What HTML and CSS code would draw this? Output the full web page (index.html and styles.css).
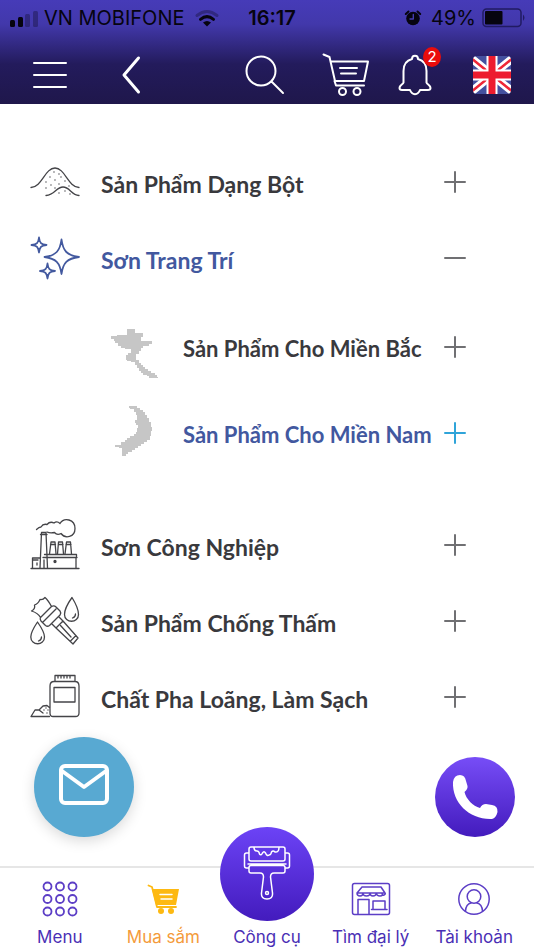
FILE: index.html
```html
<!DOCTYPE html>
<html lang="vi">
<head>
<meta charset="utf-8">
<meta name="viewport" content="width=device-width, initial-scale=1">
<title>Sản phẩm</title>
<link rel="stylesheet" href="styles.css">
</head>
<body>
<div class="app">
  <header class="header">
    <div class="status">
      <div class="status-side">
        <svg class="signal" viewBox="0 0 28 18" aria-hidden="true">
          <rect x="0" y="11" width="5" height="7" rx="1.5"/>
          <rect x="8" y="8" width="5" height="10" rx="1.5"/>
          <rect class="faint" x="15" y="5" width="5" height="13" rx="1.5"/>
          <rect class="faint" x="23" y="2" width="5" height="16" rx="1.5"/>
        </svg>
        <span>VN MOBIFONE</span>
        <svg class="wifi" viewBox="0 0 24 18" aria-hidden="true">
          <path class="arc faint" d="M2 6.500Q12-1.500 22 6.500"/>
          <path class="arc" d="M5.500 10.300Q12 5 18.500 10.300"/>
          <path d="M8 13.500Q12 10.500 16 13.500L12 17.500Z"/>
        </svg>
      </div>
      <span class="clock">16:17</span>
      <div class="status-side status-end">
        <svg class="alarm" viewBox="0 0 16 16" aria-hidden="true">
          <circle cx="8" cy="8.500" r="6.800"/>
          <path class="bells" d="M.8 4 3.500 1.500M15.200 4 12.500 1.500"/>
          <path class="hands" d="M8.300 4.500V9H5"/>
        </svg>
        <span>49%</span>
        <svg class="battery" viewBox="0 0 44 20" aria-hidden="true">
          <rect class="shell" x="1" y="1" width="38" height="17.500" rx="3.500"/>
          <rect x="3" y="3" width="17.500" height="13.500" rx="1"/>
          <path class="tip" d="M41 6.500q3 3 0 6.500z"/>
        </svg>
      </div>
    </div>
    <div class="toolbar">
      <div class="tools tools-start">
        <button class="tool" type="button" aria-label="Menu">
          <svg class="i-burger" viewBox="0 0 34 30"><path d="M1 3h32M1 15h32M1 27h32"/></svg>
        </button>
        <button class="tool" type="button" aria-label="Quay lại">
          <svg class="i-back" viewBox="0 0 20 38"><path d="M17.500 2 3 19l14.500 17"/></svg>
        </button>
      </div>
      <div class="tools tools-end">
        <button class="tool" type="button" aria-label="Tìm kiếm">
          <svg class="i-search" viewBox="0 0 40 40"><circle cx="16" cy="16" r="14.500"/><path d="M26.500 26.500 38 38"/></svg>
        </button>
        <button class="tool" type="button" aria-label="Giỏ hàng">
          <svg class="i-cart" viewBox="0 0 48 44"><path d="M1.500 1.500 7.500 4 13 28H42M9 8.500H46L42 28M12.500 28 14 32.500H42M18 15H35M19 20.500H34"/><circle cx="20.500" cy="38.500" r="3.500"/><circle cx="35" cy="38.500" r="3.500"/></svg>
        </button>
        <button class="tool bell" type="button" aria-label="Thông báo">
          <svg class="i-bell" viewBox="0 0 34 42"><path d="M14 5C14 .5 20 .5 20 5C26 6.500 28.500 11 28.500 17V28.500C29 30.500 32.500 31 32.500 34Q32.500 36 30 36H22C20 41.500 14 41.500 12 36H4Q1.500 36 1.500 34C1.500 31 5 30.500 5.500 28.500V17C5.500 11 8 6.500 14 5Z"/></svg>
          <span class="badge">2</span>
        </button>
        <button class="tool" type="button" aria-label="English">
          <svg class="i-flag" viewBox="0 0 38 38">
            <defs><clipPath id="flag"><rect width="38" height="38" rx="4"/></clipPath></defs>
            <g clip-path="url(#flag)">
              <rect width="38" height="38" fill="#44509f" stroke="none"/>
              <path d="M-2 2 40 36M-2 36 40 2" stroke="#fff" stroke-width="8"/>
              <path d="M-2 2 40 36M-2 36 40 2" stroke="#ee2737" stroke-width="2.500"/>
              <path d="M19 0V38M0 19H38" stroke="#fff" stroke-width="11"/>
              <path d="M19 0V38M0 19H38" stroke="#ed1c2e" stroke-width="7"/>
            </g>
          </svg>
        </button>
      </div>
    </div>
  </header>

  <main class="main">
    <ul class="menu">
      <li>
        <button class="row" type="button" aria-expanded="false">
          <svg class="art" viewBox="0 0 50 50" aria-hidden="true">
            <path d="M1 30.500C12 30 15 11 25 11S38 30 49 30.500M16 38.500C25 38 26 30 33 30S41 38 49 38.500"/>
            <path class="dots" d="M24 15h0M29 17h0M20 20h0M25 23h0M31 20h0M16 25h0M21 28h0M29 27h0M35 24h0M16 31h0M25 31h0M39 29h0M29 36h0M35 34h0M40 37h0"/>
          </svg>
          <span class="label">Sản Phẩm Dạng Bột</span>
          <svg class="sign" viewBox="0 0 22 22" aria-hidden="true"><path d="M11 1V21M1 11H21"/></svg>
        </button>
      </li>
      <li>
        <button class="row active" type="button" aria-expanded="true">
          <svg class="art bold" viewBox="0 0 50 50" aria-hidden="true">
            <path d="M31.500 6.500C33 18 37 22.500 49 24C37 25.500 33 30 31.500 41C30 30 26 25.500 14.500 24C26 22.500 30 18 31.500 6.500Z"/>
            <path d="M9 4.500C9.700 10 11 11.500 16.500 12C11 12.500 9.700 14 9 19.500C8.300 14 7 12.500 1.500 12C7 11.500 8.300 10 9 4.500Z"/>
            <path d="M17.500 30.500C18.200 36 19.500 37.500 25 38C19.500 38.500 18.200 40 17.500 45.500C16.800 40 15.500 38.500 10 38C15.500 37.500 16.800 36 17.500 30.500Z"/>
          </svg>
          <span class="label">Sơn Trang Trí</span>
          <svg class="sign" viewBox="0 0 22 22" aria-hidden="true"><path d="M1 11H21"/></svg>
        </button>
        <ul class="submenu">
          <li>
            <button class="row" type="button" aria-expanded="false">
              <svg class="map" viewBox="0 0 50 64" aria-hidden="true">
                <defs><pattern id="grid" width="2" height="2" patternUnits="userSpaceOnUse"><rect width="2" height="2" fill="#d6d6d6"/><circle cx="1" cy="1" r=".8" fill="#b3b3b3"/></pattern></defs>
                <path d="M17 14H25V18H33V22H31V26H42V29H39V31H33V33H31V36H29V39H26V45H29V48H31V50H33V52H35V54H38V56H41V58H45V60H47V62H48V63H39V61H37V60H33V58H31V56H29V53H27V50H25V47H21V46H17V45H16V40H18V38H21V34H15V33H11V31H8V28H5V26H4V24H1V21H7V20H17Z"/>
              </svg>
              <span class="label">Sản Phẩm Cho Miền Bắc</span>
              <svg class="sign" viewBox="0 0 22 22" aria-hidden="true"><path d="M11 1V21M1 11H21"/></svg>
            </button>
          </li>
          <li>
            <button class="row active" type="button" aria-expanded="false">
              <svg class="map" viewBox="0 0 50 64" aria-hidden="true">
                <path d="M19 5H27V7H30V9H33V11H35V14H37V17H39V21H41V26H42V30H41V35H40V39H37V41H34V43H31V45H28V47H25V49H22V51H18V53H16V55H12V47H9V46H5V44H11V41H15V39H17V37H20V35H24V33H26V31H27V27H28V24H26V22H25V19H27V14H26V11H24V8H20V7H19Z"/>
              </svg>
              <span class="label">Sản Phẩm Cho Miền Nam</span>
              <svg class="sign sky" viewBox="0 0 22 22" aria-hidden="true"><path d="M11 1V21M1 11H21"/></svg>
            </button>
          </li>
        </ul>
      </li>
      <li>
        <button class="row" type="button" aria-expanded="false">
          <svg class="art" viewBox="0 0 50 50" aria-hidden="true">
            <path d="M1 48.500H49M2.500 48V38H10M2.500 40H8M10 48 11.500 12.500H16L17.500 48M10.500 14.500H17M13 37.500H47M14.500 34.500H46.500V37.500M46 38V48M14 40V48M19.500 34 21 22H25L26 34M27.500 34 28.500 22H32.500L33.500 34M35 34 36.500 22H40.500L41.500 34M20.500 24.500H25.500M28.500 24.500H33M36 24.500H41M7 43V45"/>
            <path d="M6.500 9.500Q9 7 11 7Q13 3.500 17 4.500Q20 1 24 3Q27 .5 30 3.500C34-3 45-1 45 8.500C45 17.500 35 19 31 13.500Q27 15.500 24.500 12.500Q20 13.500 17 12"/><circle class="solid" cx="25" cy="41.500" r="1"/>
          </svg>
          <span class="label">Sơn Công Nghiệp</span>
          <svg class="sign" viewBox="0 0 22 22" aria-hidden="true"><path d="M11 1V21M1 11H21"/></svg>
        </button>
      </li>
      <li>
        <button class="row" type="button" aria-expanded="false">
          <svg class="art" viewBox="0 0 50 50" aria-hidden="true">
            <path d="M21.500 10.500Q18 4 15 1.500Q13 4 10 3.500Q8 8 4.500 9Q5.500 13 1.500 15Q8 17 10.500 21.500M21.500 10.500Q24 9 26 11L30 15Q31.500 17 30 19L19.500 29.500Q17.500 31 15.500 29.500L11 25Q9.500 23 10.500 21.500ZM26 13 13 26M29 21 33 25 26 32 22 28M33 25 48 42 43 48 26 32M46 39.500 40.500 45M30.500 29.500 41 41"/>
            <path d="M42 1.500Q34.500 12 34.500 18.500C34.500 27.500 48.500 27.500 48.500 18.500Q48.500 12 42 1.500ZM7.500 26Q.8 36 .8 41C.8 50 14.500 50 14.500 41Q14.500 36 7.500 26ZM45.500 18Q45.500 21 42.500 22M11.500 41Q11.500 44 8.500 45"/>
          </svg>
          <span class="label">Sản Phẩm Chống Thấm</span>
          <svg class="sign" viewBox="0 0 22 22" aria-hidden="true"><path d="M11 1V21M1 11H21"/></svg>
        </button>
      </li>
      <li>
        <button class="row" type="button" aria-expanded="false">
          <svg class="art" viewBox="0 0 50 50" aria-hidden="true">
            <path d="M25 9V3.500H45V9M28 4V6M31 4V6M34 4V6M37 4V6M40 4V6M24 9.500H45Q49 9.500 49 14V41Q49 44.500 45.500 44.500H23Q20 44.500 20 41V14Q20 9.500 24 9.500ZM24 15.500H45V30H24ZM19.500 44.500H1L5 38H9L13 34 17 33.500 20 36M9 38 13 41"/><path class="dots" d="M16 36h0M14 38h0M18 38h0M17 41h0"/>
          </svg>
          <span class="label">Chất Pha Loãng, Làm Sạch</span>
          <svg class="sign" viewBox="0 0 22 22" aria-hidden="true"><path d="M11 1V21M1 11H21"/></svg>
        </button>
      </li>
    </ul>
    <div class="contacts">
      <button class="mail" type="button" aria-label="Gửi thư">
        <svg viewBox="0 0 50 42"><rect x="2" y="2" width="46" height="37" rx="4"/><path d="M3 7 25 23 47 7"/></svg>
      </button>
      <button class="phone" type="button" aria-label="Gọi điện">
        <svg viewBox="0 0 46 46"><path d="M1 8Q2 1 8 1Q13 1 14 7L15.500 12Q16 15 12.500 18C14 25 21 32 28 34Q30 30 34 30L40 31Q46 32 45.500 38Q44 44 40 45C18 46 0 29 1 8Z"/></svg>
      </button>
    </div>
  </main>

  <nav class="tabs">
    <a class="tab" href="#menu">
      <svg class="icon" viewBox="0 0 40 40" aria-hidden="true"><g stroke-width="1.800"><circle cx="7.500" cy="7.500" r="4"/><circle cx="20" cy="7.500" r="4"/><circle cx="32.500" cy="7.500" r="4"/><circle cx="7.500" cy="20" r="4"/><circle cx="20" cy="20" r="4"/><circle cx="32.500" cy="20" r="4"/><circle cx="7.500" cy="32.500" r="4"/><circle cx="20" cy="32.500" r="4"/><circle cx="32.500" cy="32.500" r="4"/></g></svg>
      <span>Menu</span>
    </a>
    <a class="tab shop" href="#shop">
      <svg class="icon" viewBox="0 0 40 40" aria-hidden="true"><path d="M5.500 6.500 9 8 14 28H33" stroke-width="1.800"/><path class="fill" d="M9 10H36L33 26H13Z"/><path d="M17 15.500H29M18 20H29" stroke="#fff" stroke-width="1.500"/><circle class="fill" cx="18" cy="32" r="3"/><circle class="fill" cx="28" cy="32" r="3"/></svg>
      <span>Mua sắm</span>
    </a>
    <a class="tab tools-tab" href="#tools">
      <span class="disc">
        <svg viewBox="0 0 48 56" aria-hidden="true"><path d="M8 1H40Q42 1 42 3V13Q42 15 40 15H8Q6 15 6 13V3Q6 1 8 1ZM11 1.500Q11 5 14 5Q16 5 16.500 8Q18 10 19.500 7Q21 4.500 22.500 7Q24 10.500 26 9Q28 9 28.500 6Q30 4 32 6Q36 6.500 36 1.500M6 7H3.500Q1.500 7 1.500 9V20Q1.500 22 3.500 22H6M42 7H44.500Q46.500 7 46.500 9V20Q46.500 22 44.500 22H42M5 18H43M8 19.500H40Q42 19.500 42 21.500V25Q42 27 40 27H31Q27.500 27 27.500 31L29.500 47Q30 53 24 53T18.500 47L20.500 31Q20.500 27 17 27H8Q6 27 6 25V21.500Q6 19.500 8 19.500Z"/><circle cx="24" cy="47" r="1.500"/></svg>
      </span>
      <span>Công cụ</span>
    </a>
    <a class="tab" href="#stores">
      <svg class="icon" viewBox="0 0 40 40" aria-hidden="true"><rect x="1.500" y="4.500" width="37" height="31" rx="2"/><path d="M11 8H30L34 14H6ZM6 14Q6 17 9 17T12 14Q12 17 15.500 17T19 14Q19 17 22 17T25.500 14Q25.500 17 29 17T31 14Q31 17 33 16T34 14M7 35V20.500H18V35M22 30V22H34V30M20.500 30.500H36"/></svg>
      <span>Tìm đại lý</span>
    </a>
    <a class="tab" href="#account">
      <svg class="icon" viewBox="0 0 40 40" aria-hidden="true"><circle cx="20" cy="20" r="15.200"/><circle cx="20" cy="17.500" r="6.800"/><path d="M11.500 32Q12 25 17 24M28.500 32Q28 25 23 24"/></svg>
      <span>Tài khoản</span>
    </a>
  </nav>
</div>
</body>
</html>
```

FILE: styles.css
```css
* { box-sizing: border-box; }
body { margin: 0; background: #fff; color: #39393d; font-family: Lato, "Noto Sans", sans-serif; }
button { margin: 0; padding: 0; border: 0; background: none; color: inherit; font: inherit; cursor: pointer; }
ul { margin: 0; padding: 0; list-style: none; }
svg { display: block; flex: none; overflow: visible; fill: none; stroke: currentColor; stroke-width: 1.5; stroke-linecap: round; stroke-linejoin: round; }

.app { display: flex; flex-direction: column; min-height: 100vh; }

.header { background: linear-gradient(#463bb8 0, #4238ab 24px, #231b5c 64px, #1f174b 100%); }
.status { display: flex; align-items: center; height: 36px; padding: 0 8px 0 10px; color: #06040f; font: 20px/24px Inter, sans-serif; }
.status svg { fill: #06040f; stroke: none; }
.status-side { display: flex; flex: 1; align-items: center; gap: 6px; }
.status-end { justify-content: flex-end; }
.status .faint { opacity: .3; }
.signal { width: 28px; height: 18px; }
.wifi { width: 24px; height: 18px; margin-left: 4px; }
.wifi .arc { fill: none; stroke: #06040f; stroke-width: 3; }
.clock { padding-left: 8px; font-weight: 600; }
.alarm { width: 16px; height: 16px; margin-right: 4px; }
.alarm .bells { stroke: #06040f; stroke-width: 2; }
.alarm .hands { fill: none; stroke: #443aae; stroke-width: 1.4; }
.battery { width: 44px; height: 20px; }
.battery .shell { fill: none; stroke: #211b62; stroke-width: 1.5; }
.battery .tip { fill: #211b62; }

.toolbar { display: flex; justify-content: space-between; height: 68px; padding: 0 23px 0 33px; color: #fff; }
.tools { display: flex; align-items: center; padding-top: 10px; }
.tools-start { gap: 54px; }
.tools-end { gap: 37px; }
.tool svg { stroke-width: 2; }
.i-burger { width: 34px; height: 30px; }
.tool .i-back { width: 20px; height: 38px; stroke-width: 3; }
.i-search { width: 40px; height: 40px; }
.i-cart { width: 48px; height: 44px; }
.bell { position: relative; margin: 0 4px 0 -9px; }
.i-bell { width: 34px; height: 42px; }
.badge { position: absolute; top: -7px; right: -9px; width: 18px; height: 20px; border-radius: 50%; background: #ea0c0c; font: 15px/20px Inter, sans-serif; text-align: center; }
.i-flag { width: 38px; height: 38px; }
.tool .i-flag { stroke-linecap: butt; }

.main { display: flex; flex: 1; flex-direction: column; padding-top: 40px; }
.row { display: flex; align-items: center; width: 100%; height: 76px; padding: 0 68px 0 30px; text-align: left; }
.art { width: 50px; height: 50px; stroke: #444448; stroke-width: 1.3; }
.art.bold { stroke: #43599f; stroke-width: 1.8; }
.art .dots { stroke-width: 1.4; }
.art .solid { fill: #39393d; }
.label { flex: 1; padding: 4px 0 0 21px; font-size: 23px; line-height: 30px; font-weight: 700; white-space: nowrap; }
.active .label { color: #42589f; }
.sign { width: 22px; height: 22px; stroke: #707073; stroke-width: 2; }
.sign.sky { stroke: #2fa4d9; }
.submenu { padding: 8px 0 31px; }
.submenu .row { height: 86px; padding-left: 110px; }
.submenu .label { padding-left: 23px; font-size: 22px; }
.map { width: 50px; height: 64px; fill: url(#grid); stroke: none; }

.contacts { display: flex; align-items: flex-end; justify-content: space-between; margin-top: auto; padding: 0 19px 29px 34px; }
.mail { display: grid; place-items: center; width: 100px; height: 100px; padding-bottom: 4px; border-radius: 50%; background: #58a9d2; box-shadow: 0 4px 14px #00000026; color: #fff; }
.mail svg { width: 50px; height: 42px; stroke-width: 4; }
.phone { display: grid; place-items: center; width: 80px; height: 80px; border-radius: 50%; background: linear-gradient(#774df7, #431bbd); color: #fff; }
.phone svg { width: 46px; height: 46px; fill: #fff; stroke: none; }

.tabs { display: grid; grid-template-rows: minmax(0, 1fr); grid-template-columns: repeat(5, minmax(0, 1fr)); height: 84px; padding: 0 8px; border-top: 2px solid #e6e6e6; }
.tab { display: flex; flex-direction: column; align-items: center; justify-content: flex-end; gap: 7px; padding-bottom: 2px; color: #4a2fb5; font: 17px/22px Inter, "Noto Sans", sans-serif; text-decoration: none; white-space: nowrap; }
.icon { width: 40px; height: 40px; stroke: #5c3ec6; }
.shop { color: #f49b3b; }
.shop .icon { stroke: #fdb912; }
.shop .fill { fill: #fdb912; stroke: none; }
.tools-tab { gap: 5px; }
.disc { display: grid; flex: none; place-items: center; width: 94px; height: 94px; border-radius: 50%; background: linear-gradient(#6c43f6, #431bbd); color: #fff; }
.disc svg { width: 48px; height: 56px; }
```
